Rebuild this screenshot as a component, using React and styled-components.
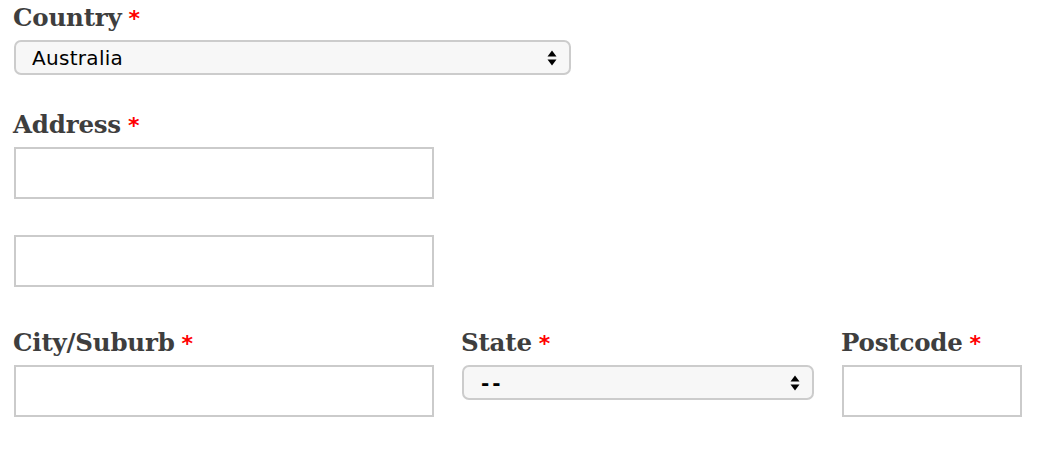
import React from "react";
import styled, { createGlobalStyle } from "styled-components";

const Global = createGlobalStyle`
  html, body { margin: 0; padding: 0; background: #fff; }
  body { font-family: "DejaVu Serif", Georgia, serif; }
`;

const Page = styled.form`
  padding: 1px 0 0 14px;
  width: 1008px;
`;

const Group = styled.div`
  display: flex;
  flex-direction: column;
  width: ${(p) => p.$w || 420}px;
  margin-top: ${(p) => p.$mt || 0}px;
`;

const Row = styled.div`
  display: flex;
  align-items: flex-start;
  gap: 28px;
  margin-top: ${(p) => p.$mt || 0}px;
`;

const Label = styled.label`
  display: block;
  height: 34px;
  line-height: 34px;
  margin: 0 0 5px -1px;
  font-family: "DejaVu Serif", Georgia, serif;
  font-weight: 700;
  font-size: 24.5px;
  letter-spacing: -0.2px;
  color: #3e3e3e;
  white-space: nowrap;
`;

const Req = styled.span`
  color: #f00;
  font-family: "DejaVu Sans", sans-serif;
  font-size: 22px;
  margin-left: 7px;
`;

const TextInput = styled.input`
  box-sizing: border-box;
  width: 100%;
  height: 52px;
  border: 2px solid #cbcbcb;
  border-radius: 0;
  background: #fff;
  padding: 0 10px;
  font: 18px "DejaVu Sans", sans-serif;
  outline: none;
  margin-top: ${(p) => p.$mt || 0}px;
`;

const SelectWrap = styled.div`
  position: relative;
  width: 100%;
  height: 35px;
`;

const Select = styled.select`
  appearance: none;
  -webkit-appearance: none;
  box-sizing: border-box;
  width: 100%;
  height: 35px;
  border: 2px solid #cccccc;
  border-radius: 7px;
  background: #f7f7f7;
  padding: 0 30px 0 ${(p) => p.$pl || 16}px;
  font: 20px "DejaVu Sans", sans-serif;
  font-weight: ${(p) => (p.$wide ? 700 : 400)};
  letter-spacing: ${(p) => (p.$wide ? "3px" : "0.3px")};
  color: #000;
  outline: none;
`;

const Arrows = styled.svg`
  position: absolute;
  right: 14px;
  top: 50%;
  transform: translateY(-50%);
  pointer-events: none;
`;

function SelectField({ value, options, wide, pl }) {
  return (
    <SelectWrap>
      <Select defaultValue={value} $wide={wide} $pl={pl}>
        {options.map((o) => (
          <option key={o}>{o}</option>
        ))}
      </Select>
      <Arrows width="10" height="16" viewBox="0 0 10 16">
        <path d="M0.5 6.5 L5 0.5 L9.5 6.5 Z" fill="#000" />
        <path d="M0.5 9.5 L5 15.5 L9.5 9.5 Z" fill="#000" />
      </Arrows>
    </SelectWrap>
  );
}

export default function App() {
  return (
    <>
      <Global />
      <Page>
        <Group $w={557}>
          <Label>
            Country<Req>*</Req>
          </Label>
          <SelectField value="Australia" options={["Australia", "New Zealand"]} />
        </Group>

        <Group $w={420} $mt={33}>
          <Label>
            Address<Req>*</Req>
          </Label>
          <TextInput />
          <TextInput $mt={36} />
        </Group>

        <Row $mt={39}>
          <Group $w={420}>
            <Label>
              City/Suburb<Req>*</Req>
            </Label>
            <TextInput />
          </Group>
          <Group $w={352}>
            <Label>
              State<Req>*</Req>
            </Label>
            <SelectField
              value="--"
              wide
              pl={17}
              options={["--", "ACT", "NSW", "NT", "QLD", "SA", "TAS", "VIC", "WA"]}
            />
          </Group>
          <Group $w={180}>
            <Label>
              Postcode<Req>*</Req>
            </Label>
            <TextInput />
          </Group>
        </Row>
      </Page>
    </>
  );
}
